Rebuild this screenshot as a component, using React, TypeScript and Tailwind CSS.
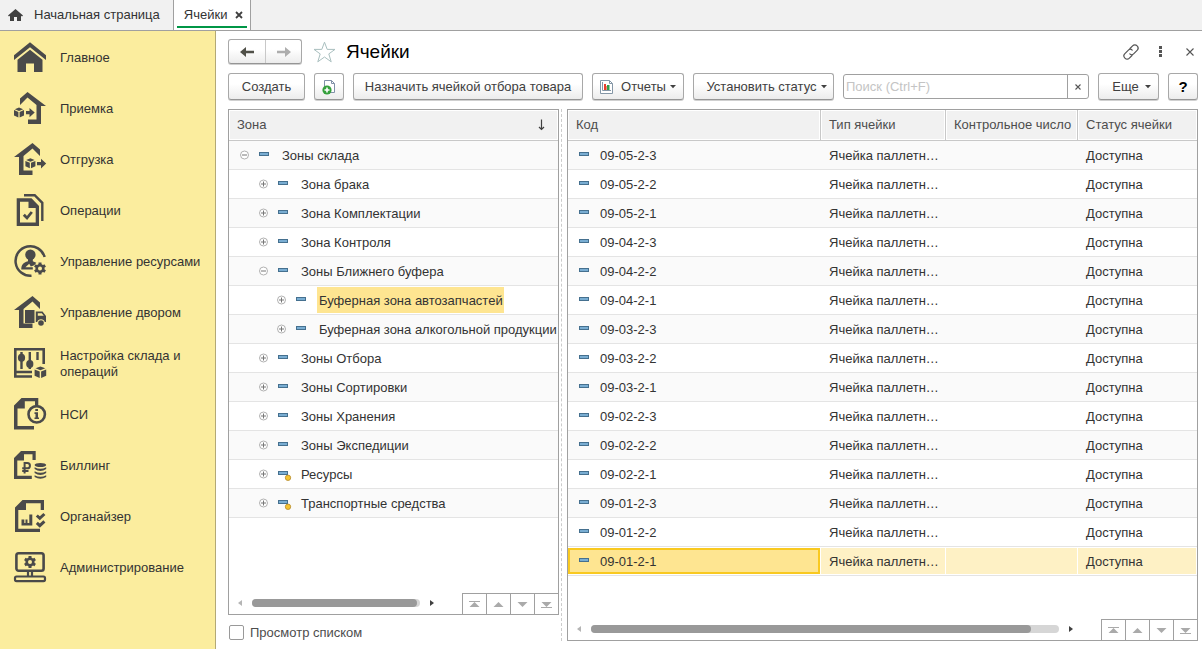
import React from 'react';

interface Zone {
    name: string;
    level: 0 | 1 | 2;
    open?: boolean;
    predefined?: boolean;
    selected?: boolean;
}

const zones: Zone[] = [
    { name: 'Зоны склада', level: 0, open: true },
    { name: 'Зона брака', level: 1 },
    { name: 'Зона Комплектации', level: 1 },
    { name: 'Зона Контроля', level: 1 },
    { name: 'Зоны Ближнего буфера', level: 1, open: true },
    { name: 'Буферная зона автозапчастей', level: 2, selected: true },
    { name: 'Буферная зона алкогольной продукции', level: 2 },
    { name: 'Зоны Отбора', level: 1 },
    { name: 'Зоны Сортировки', level: 1 },
    { name: 'Зоны Хранения', level: 1 },
    { name: 'Зоны Экспедиции', level: 1 },
    { name: 'Ресурсы', level: 1, predefined: true },
    { name: 'Транспортные средства', level: 1, predefined: true },
];

const cells = [
    '09-05-2-3', '09-05-2-2', '09-05-2-1',
    '09-04-2-3', '09-04-2-2', '09-04-2-1',
    '09-03-2-3', '09-03-2-2', '09-03-2-1',
    '09-02-2-3', '09-02-2-2', '09-02-2-1',
    '09-01-2-3', '09-01-2-2', '09-01-2-1',
];
const selectedCell = '09-01-2-1';

const indents = ['pl-[11px]', 'pl-[30px]', 'pl-[48px]'];

const buttonClass =
    'flex h-[27px] shrink-0 items-center justify-center whitespace-nowrap rounded-[3px] border border-[#a8a8a8] border-b-[#959595] bg-linear-to-b from-white from-40% to-[#ececec] text-[#404040] shadow-[0_1px_0_#d0d0d0]';

/* ---------- icons ---------- */

function Box({ x, y, r }: { x: number; y: number; r: number }) {
    return (
        <g transform={`translate(${x} ${y}) scale(${r / 5})`}>
            <path d="M0-5 4.2-3.3 0-1.6-4.2-3.3Z" />
            <path d="M-5-2.4-.6-.6V5L-5 3Z" />
            <path d="M5-2.4.6-.6V5L5 3Z" />
        </g>
    );
}

function Gear({ x, y, r }: { x: number; y: number; r: number }) {
    return (
        <g transform={`translate(${x} ${y}) scale(${r / 6})`}>
            <circle r="3.3" fill="none" stroke="currentColor" strokeWidth="2.6" />
            {[0, 60, 120, 180, 240, 300].map((a) => (
                <rect key={a} x="-1.5" y="-6" width="3" height="2.6" transform={`rotate(${a})`} />
            ))}
        </g>
    );
}

const houseLeft = 'M0 14 18.5 0 26 6.5V13L18.5 5.5 9.5 13V27.5H18.5V32H5V14Z';

const sections: { title: string; icon: React.ReactNode }[] = [
    {
        title: 'Главное',
        icon: (
            <>
                <path d="M0 14.2 16 1.3 32 14.2V19L16 6.3 0 19Z" />
                <path d="M3.5 18.8 16 8.8 28.5 18.8V31H20V22.5H12V31H3.5Z" />
            </>
        ),
    },
    {
        title: 'Приемка',
        icon: (
            <>
                <path d="M32 14 13.5 0 6 6.5V13L13.5 5.5 22.5 13V27.5H14V32H27V14Z" />
                <Box x={5} y={20.5} r={5} />
                <path d="M12 19H15.5V16L20.7 20.6 15.5 25.2V22.2H12Z" />
            </>
        ),
    },
    {
        title: 'Отгрузка',
        icon: (
            <>
                <path d={houseLeft} />
                <Box x={16.4} y={20.3} r={5} />
                <path d="M23 19H27V15.8L32.2 20.6 27 25.4V22.2H23Z" />
            </>
        ),
    },
    {
        title: 'Операции',
        icon: (
            <>
                <path d="M10 1.2H20.7L28.3 8.8V27" fill="none" stroke="currentColor" strokeWidth="2.4" />
                <path d="M2.7 4.3H17.5L25 12V32H2.7ZM6 7.8V28.5H21.7V14H14.5V7.8Z" fillRule="evenodd" />
                <path d="M9.8 20.8 13 24 17.8 18" fill="none" stroke="currentColor" strokeWidth="2.8" />
            </>
        ),
    },
    {
        title: 'Управление ресурсами',
        icon: (
            <>
                <path d="M30.6 12A14.8 14.8 0 1 0 17.5 30.8" fill="none" stroke="currentColor" strokeWidth="2.5" />
                <circle cx="16.4" cy="9.8" r="5.2" />
                <path d="M14 13H18.8V16.2L22.3 17.8 20.3 20.3 16.8 21.4 15.2 18.8 11.4 22.2H18.8V24.5H7.3C7.3 20 9 17.6 14 16.2Z" />
                <Gear x={26} y={23.5} r={6} />
            </>
        ),
    },
    {
        title: 'Управление двором',
        icon: (
            <>
                <path d={houseLeft} />
                <path d="M11 14H20.5V27H11Z" />
                <path d="M21.8 15.5H28.5L32 20V26H30.8A4 4 0 0 0 23.2 26H21.8ZM23.8 17.3V19.8H29.8L27.8 17.3Z" fillRule="evenodd" />
                <circle cx="27" cy="27" r="2.8" />
            </>
        ),
    },
    {
        title: 'Настройка склада и операций',
        icon: (
            <>
                <path d="M29.7 17V2.3H1.3V29.5H18M1 25H18" fill="none" stroke="currentColor" strokeWidth="2.6" />
                <path d="M7.5 5V22M15.8 5V22M23.5 5V13" fill="none" stroke="currentColor" strokeWidth="2.4" />
                <ellipse cx="7.5" cy="10.8" rx="3.6" ry="4" />
                <ellipse cx="15.8" cy="17" rx="3.6" ry="4" />
                <Box x={26.4} y={25.2} r={5.8} />
            </>
        ),
    },
    {
        title: 'НСИ',
        icon: (
            <>
                <path d="M0 7.5 7.5 0H24.3V7H21V3.3H10.8V10.5H3.5V28H20V31.5H0Z" />
                <circle cx="22.7" cy="16.3" r="8.2" fill="none" stroke="currentColor" strokeWidth="2.6" />
                <path d="M21.3 11H24V13H21.3ZM20.5 14.3H24V19.4H25V21H20.5V19.4H21.5V16H20.5Z" />
            </>
        ),
    },
    {
        title: 'Биллинг',
        icon: (
            <>
                <path d="M0 9 7 2H21.7V11H18.5V5.2H10V11.5H3.3V26.8H17.8V30H0Z" />
                <path d="M10.6 24.5V14H13.3A2.6 2.6 0 0 1 13.3 19.3H8.2M8.2 22H14.5" fill="none" stroke="currentColor" strokeWidth="2" />
                <ellipse cx="26.4" cy="16" rx="5.8" ry="2" />
                <path d="M20.6 18.3Q26.4 21.3 32.2 18.3V20Q26.4 23.8 20.6 20ZM20.6 22.3Q26.4 25.3 32.2 22.3V24Q26.4 27.8 20.6 24ZM20.6 26.3Q26.4 29.3 32.2 26.3V28Q26.4 31.6 20.6 28Z" />
            </>
        ),
    },
    {
        title: 'Органайзер',
        icon: (
            <>
                <path d="M1 7.5 8.5 0H30V10H26.7V3.3H12V10H4.3V28.7H26V32H1Z" />
                <path d="M7.5 19.5H10.3V23H11.5V19.5H13.5V23H15.3V14.5H18.3V25.5H7.5Z" />
                <path d="M22.8 15.5 25.8 18.3 30.4 14M22.8 22.8 25.8 25.6 30.4 21.3" fill="none" stroke="currentColor" strokeWidth="3" />
            </>
        ),
    },
    {
        title: 'Администрирование',
        icon: (
            <>
                <rect x="2.4" y="2.2" width="27.2" height="17.5" rx="2.2" fill="none" stroke="currentColor" strokeWidth="2.6" />
                <Gear x={16} y={11} r={6} />
                <path d="M14 20V25.7M18 20V25.7" fill="none" stroke="currentColor" strokeWidth="2.2" />
                <rect x="1" y="25.5" width="30" height="4.6" rx="1.5" fill="none" stroke="currentColor" strokeWidth="2.2" />
            </>
        ),
    },
];

function ItemIcon({ predefined }: { predefined?: boolean }) {
    return (
        <svg width="14" height="14" viewBox="0 0 14 14" className="shrink-0" aria-hidden="true">
            <rect x="0.5" y="4.5" width="9" height="3" fill="#79add2" stroke="#45708f" />
            {predefined && <circle cx="10" cy="10.8" r="2.7" fill="#f5c431" stroke="#b58a2c" strokeWidth="0.8" />}
        </svg>
    );
}

function Caret() {
    return (
        <svg width="6" height="4" viewBox="0 0 6 4" className="mt-px" aria-hidden="true">
            <path d="M0 0H6L3 3.3Z" fill="#404040" />
        </svg>
    );
}

/* ---------- parts of the lists ---------- */

function ListFooter({ thumb }: { thumb: string }) {
    const steps = [
        { label: 'В начало', d: 'M6 5H17V6H6ZM11.5 6 16.5 11H6.5Z' },
        { label: 'Вверх', d: 'M11.5 6 16.5 11H6.5Z' },
        { label: 'Вниз', d: 'M11.5 11 16.5 6H6.5Z' },
        { label: 'В конец', d: 'M6 11H17V12H6ZM11.5 11 16.5 6H6.5Z' },
    ];

    return (
        <div className="mt-auto flex h-[21px]">
            <div className="flex h-5 flex-1 items-center">
                <svg width="4" height="6" viewBox="0 0 4 6" className="ml-[9px]" aria-hidden="true">
                    <path d="M4 0V6L0 3Z" fill="#b5b5b5" />
                </svg>
                <div className="ml-[10px] h-2 flex-1 rounded-full bg-[#d6d6d6]">
                    <div className={`h-2 rounded-full bg-[#999] ${thumb}`} />
                </div>
                <svg width="4" height="6" viewBox="0 0 4 6" className="ml-[10px] mr-7" aria-hidden="true">
                    <path d="M0 0V6L4 3Z" fill="#404040" />
                </svg>
            </div>
            <div className="flex">
                {steps.map((step) => (
                    <button key={step.label} type="button" aria-label={step.label} className="h-[21px] w-6 border-l border-t border-[#a0a0a0]">
                        <svg width="23" height="17" viewBox="0 0 23 17" className="fill-[#aaa]">
                            <path d={step.d} />
                        </svg>
                    </button>
                ))}
            </div>
        </div>
    );
}

function ZoneList() {
    return (
        <div className="flex flex-1 flex-col overflow-hidden border border-[#a0a0a0]">
            <table className="w-full table-fixed border-separate border-spacing-0">
                <thead>
                    <tr>
                        <th className="h-[31px] border-b border-[#c8c8c8] p-px text-left font-normal text-[#4d4d4d]">
                            <div className="flex h-7 items-center justify-between bg-[#f1f1f1] pl-[7px] pr-[11px]">
                                Зона
                                <svg width="9" height="12" viewBox="0 0 9 12" aria-hidden="true">
                                    <path d="M4.5 0.5V10.5M2 8 4.5 10.5 7 8" fill="none" stroke="#404040" strokeWidth="1.2" />
                                </svg>
                            </div>
                        </th>
                    </tr>
                </thead>
                <tbody>
                    {zones.map((zone) => (
                        <tr key={zone.name} className="odd:bg-[#fafafa]">
                            <td className="h-[29px] border-b border-[#e4e4e4] p-0">
                                <div className={`flex h-7 items-center ${indents[zone.level]}`}>
                                    <button type="button" aria-label={zone.open ? 'Свернуть' : 'Развернуть'} className="mr-[10px] shrink-0">
                                        <svg width="9" height="10" viewBox="0 0 9 10">
                                            <circle cx="4.5" cy="5" r="4" fill="#fff" stroke="#a8a8a8" strokeWidth="0.9" />
                                            <path d={zone.open ? 'M2 5H7' : 'M2 5H7M4.5 2.5V7.5'} stroke="#777" strokeWidth="1" />
                                        </svg>
                                    </button>
                                    <ItemIcon predefined={zone.predefined} />
                                    <span className={`ml-[7px] flex h-[26px] items-center whitespace-nowrap pl-0.5 pt-[2px] ${zone.selected ? 'bg-[#fee591] pr-px' : ''}`}>
                                        {zone.name}
                                    </span>
                                </div>
                            </td>
                        </tr>
                    ))}
                </tbody>
            </table>
            <ListFooter thumb="w-[98%]" />
        </div>
    );
}

function CellList() {
    const columns = ['Код', 'Тип ячейки', 'Контрольное число', 'Статус ячейки'];

    return (
        <div className="flex min-w-0 flex-1 flex-col overflow-hidden border border-[#a0a0a0]">
            <table className="w-full table-fixed border-separate border-spacing-0">
                <colgroup>
                    <col />
                    <col className="w-[125px]" />
                    <col className="w-[132px]" />
                    <col className="w-[119px]" />
                </colgroup>
                <thead>
                    <tr>
                        {columns.map((column) => (
                            <th key={column} className="h-[31px] whitespace-nowrap border-b border-r border-[#c8c8c8] p-px text-left font-normal text-[#4d4d4d] last:border-r-0">
                                <div className="flex h-7 items-center bg-[#f1f1f1] pl-[7px]">{column}</div>
                            </th>
                        ))}
                    </tr>
                </thead>
                <tbody>
                    {cells.map((code) => {
                        const selected = code === selectedCell;
                        const td = 'h-[29px] border-b border-b-[#e4e4e4] p-0';
                        const cell = `flex items-center pl-2 pt-[2px] ${selected ? 'my-px mr-px h-[26px] bg-[#fef1c5]' : 'h-7'}`;

                        return (
                            <tr key={code} className={selected ? 'bg-white' : 'odd:bg-[#fafafa]'}>
                                <td className={td}>
                                    <div className={`flex items-center ${selected ? 'my-px mr-px h-[26px] border-2 border-[#f9c920] bg-[#fee591] pl-[9px]' : 'h-7 pl-[11px]'}`}>
                                        <ItemIcon />
                                        <span className="ml-[7px] pt-[2px]">{code}</span>
                                    </div>
                                </td>
                                <td className={td}>
                                    <div className={cell}>Ячейка паллетн…</div>
                                </td>
                                <td className={td}>
                                    <div className={cell} />
                                </td>
                                <td className={td}>
                                    <div className={cell}>Доступна</div>
                                </td>
                            </tr>
                        );
                    })}
                </tbody>
            </table>
            <ListFooter thumb="w-[94%]" />
        </div>
    );
}

/* ---------- page ---------- */

function Tabs() {
    return (
        <nav className="flex h-[31px] border-b border-[#a0a0a0] bg-[#f1f1f1]">
            <a href="#home" className="flex items-center pl-2 pr-[13px]">
                <svg width="15" height="12" viewBox="0 0 15 12" className="mr-[11px]" fill="#404040" aria-hidden="true">
                    <path d="M7.5 0 15 6.5 14 7.5 13 6.8V12H9V8H6V12H2V6.8L1 7.5 0 6.5Z" />
                </svg>
                Начальная страница
            </a>
            <div className="border-x border-[#a0a0a0] bg-white px-[3px]">
                <div className="flex h-7 items-center border-b-2 border-[#009646] pl-[7px] pr-1 pt-[3px]">
                    <a href="#cells">Ячейки</a>
                    <button type="button" aria-label="Закрыть вкладку" className="ml-2">
                        <svg width="8" height="8" viewBox="0 0 8 8">
                            <path d="M1 1 7 7M7 1 1 7" stroke="#404040" strokeWidth="1.8" />
                        </svg>
                    </button>
                </div>
            </div>
        </nav>
    );
}

function Sidebar() {
    return (
        <aside className="w-[216px] shrink-0 border-r border-[#b3a976] bg-[#fbed9e]">
            <ul>
                {sections.map((section) => (
                    <li key={section.title}>
                        <a href="#section" className="flex h-[51px] items-center pl-[14px] pr-3 pt-px">
                            <svg width="32" height="32" viewBox="0 0 32 32" className="mr-[14px] shrink-0 overflow-visible text-[#4a4a4a]" fill="currentColor" aria-hidden="true">
                                {section.icon}
                            </svg>
                            <span className="pt-[2px]">{section.title}</span>
                        </a>
                    </li>
                ))}
            </ul>
        </aside>
    );
}

function Header() {
    return (
        <header className="flex h-[25px] items-center">
            <div className="flex h-[25px] rounded-[3px] border border-[#a8a8a8] border-b-[#959595] bg-linear-to-b from-white from-40% to-[#ececec] shadow-[0_1px_0_#d0d0d0]">
                <button type="button" aria-label="Назад" className="flex w-9 items-center justify-center">
                    <svg width="14" height="10" viewBox="0 0 14 10" fill="#505048">
                        <path d="M0 5 6 0V3.8H14V6.2H6V10Z" />
                    </svg>
                </button>
                <button type="button" aria-label="Вперед" className="flex w-9 items-center justify-center border-l border-[#c8c8c8]">
                    <svg width="14" height="10" viewBox="0 0 14 10" fill="#adadad">
                        <path d="M14 5 8 0V3.8H0V6.2H8V10Z" />
                    </svg>
                </button>
            </div>
            <button type="button" aria-label="В избранное" className="ml-[11px]">
                <svg width="23" height="22" viewBox="0 0 23 22">
                    <path d="M11.5 1.2 14.2 8.4H22L15.8 12.9 18.2 20.8 11.5 16 4.8 20.8 7.2 12.9 1 8.4H8.8Z" fill="none" stroke="#a9bfbf" />
                </svg>
            </button>
            <h1 className="ml-[10px] text-[19px] text-black">Ячейки</h1>
            <button type="button" aria-label="Получить ссылку" className="ml-auto">
                <svg width="16" height="16" viewBox="0 0 16 16" fill="none" stroke="#555" strokeWidth="1.2" strokeLinecap="round">
                    <path d="M7 4.5 9.6 1.9A2.7 2.7 0 0 1 14.1 6.4L10.6 9.9A2.7 2.7 0 0 1 6.8 9.9" />
                    <path d="M9 11.5 6.4 14.1A2.7 2.7 0 0 1 1.9 9.6L5.4 6.1A2.7 2.7 0 0 1 9.2 6.1" />
                </svg>
            </button>
            <button type="button" aria-label="Меню" className="ml-5">
                <svg width="3" height="11" viewBox="0 0 3 11" fill="#555">
                    <path d="M0 0H3V3H0ZM0 4H3V7H0ZM0 8H3V11H0Z" />
                </svg>
            </button>
            <button type="button" aria-label="Закрыть" className="ml-6 mr-1">
                <svg width="8" height="8" viewBox="0 0 8 8">
                    <path d="M0.5 0.5 7.5 7.5M7.5 0.5 0.5 7.5" stroke="#555" strokeWidth="1.1" />
                </svg>
            </button>
        </header>
    );
}

function Toolbar() {
    return (
        <div className="mt-[9px] flex items-center gap-[9px]">
            <button type="button" className={`${buttonClass} w-[77px]`}>Создать</button>
            <button type="button" aria-label="Создать копированием" className={`${buttonClass} w-[30px]`}>
                <svg width="14" height="16" viewBox="0 0 14 16">
                    <path d="M2.5 9V1.5H9.5L12.5 4.5V13.5H8" fill="#fff" stroke="#8090a8" />
                    <path d="M9.5 1.5V4.5H12.5" fill="none" stroke="#8090a8" />
                    <circle cx="5" cy="11" r="4.6" fill="#35a03c" />
                    <path d="M5 8.5V13.5M2.5 11H7.5" stroke="#fff" strokeWidth="1.6" />
                </svg>
            </button>
            <button type="button" className={`${buttonClass} w-[230px]`}>Назначить ячейкой отбора товара</button>
            <button type="button" className={`${buttonClass} w-[92px]`}>
                <svg width="13" height="14" viewBox="0 0 13 14" className="mr-2" aria-hidden="true">
                    <path d="M0.5 0.5H9.5L12.5 3.5V13.5H0.5Z" fill="#fff" stroke="#8496a6" />
                    <path d="M9.5 0.5V3.5H12.5" fill="none" stroke="#8496a6" />
                    <path d="M2.5 2V10.5H11" fill="none" stroke="#8496a6" />
                    <path d="M4 4H6V10H4Z" fill="#e8402c" />
                    <path d="M6 6H7V10H6Z" fill="#f08a7c" />
                    <path d="M7 5H9.5V10H7Z" fill="#2f9e4a" />
                </svg>
                Отчеты
                <span className="ml-1"><Caret /></span>
            </button>
            <button type="button" className={`${buttonClass} w-[141px] pl-[6px]`}>
                Установить статус
                <span className="ml-1"><Caret /></span>
            </button>
            <div className="flex h-[25px] min-w-0 flex-1 rounded-[3px] border border-[#a0a0a0] bg-white">
                <input type="text" aria-label="Поиск" placeholder="Поиск (Ctrl+F)" className="min-w-0 flex-1 px-0.5 outline-none placeholder:text-[#c4c4c4]" />
                <button type="button" aria-label="Очистить" className="flex w-[21px] items-center justify-center border-l border-[#a0a0a0]">
                    <svg width="6" height="6" viewBox="0 0 6 6">
                        <path d="M0.5 0.5 5.5 5.5M5.5 0.5 0.5 5.5" stroke="#555" strokeWidth="1.1" />
                    </svg>
                </button>
            </div>
            <button type="button" className={`${buttonClass} w-[61px] pl-[6px]`}>
                Еще
                <span className="ml-[6px]"><Caret /></span>
            </button>
            <button type="button" className={`${buttonClass} w-[30px] text-[15px] font-bold text-black`}>?</button>
        </div>
    );
}

export default function App() {
    return (
        <div className="flex min-h-screen flex-col bg-white font-['Liberation_Sans',Arial,sans-serif] text-[13px] leading-4 text-[#333]">
            <Tabs />
            <div className="flex flex-1">
                <Sidebar />
                <main className="flex min-w-0 flex-1 flex-col pb-2 pl-3 pr-1 pt-2">
                    <Header />
                    <Toolbar />
                    <div className="mt-[9px] flex flex-1">
                        <div className="flex w-[331px] shrink-0 flex-col">
                            <ZoneList />
                            <label className="flex h-[26px] items-center pt-[9px] text-[#4d4d4d]">
                                <input type="checkbox" className="ml-px mr-[6px] size-[15px] appearance-none rounded-[2px] border border-[#999] bg-white checked:bg-[#999]" />
                                Просмотр списком
                            </label>
                        </div>
                        <div className="ml-0.5 mr-[5px] border-l border-dashed border-[#ccc]" />
                        <CellList />
                    </div>
                </main>
            </div>
        </div>
    );
}
